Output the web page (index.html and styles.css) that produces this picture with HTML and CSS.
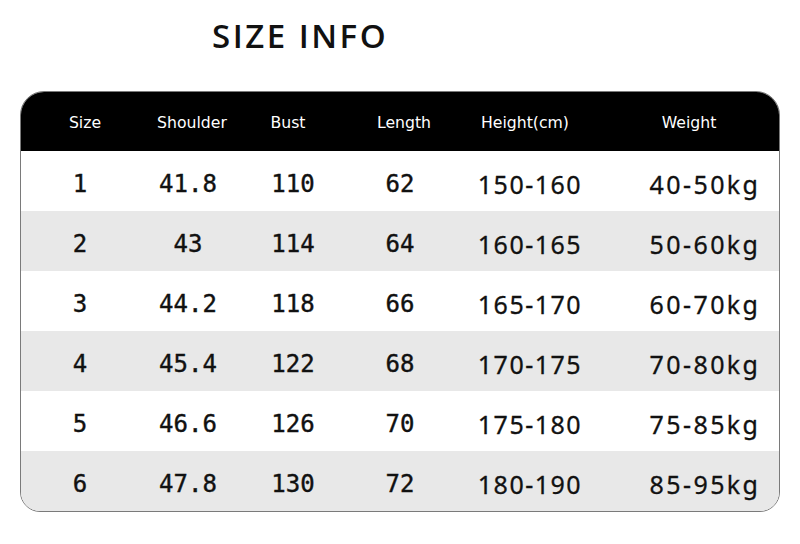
FILE: index.html
```html
<!DOCTYPE html>
<html>
<head>
<meta charset="utf-8">
<link rel="stylesheet" href="styles.css">
</head>
<body>
<div class="page">
  <h1 class="title">SIZE INFO</h1>
  <div class="table">
    <div class="row head">
      <div class="c c1">Size</div><div class="c c2">Shoulder</div><div class="c c3">Bust</div><div class="c c4">Length</div><div class="c c5">Height(cm)</div><div class="c c6">Weight</div>
    </div>
    <div class="row">
      <div class="c c1">1</div><div class="c c2">41.8</div><div class="c c3">110</div><div class="c c4">62</div><div class="c c5">150-160</div><div class="c c6">40-50kg</div>
    </div>
    <div class="row alt">
      <div class="c c1">2</div><div class="c c2">43</div><div class="c c3">114</div><div class="c c4">64</div><div class="c c5">160-165</div><div class="c c6">50-60kg</div>
    </div>
    <div class="row">
      <div class="c c1">3</div><div class="c c2">44.2</div><div class="c c3">118</div><div class="c c4">66</div><div class="c c5">165-170</div><div class="c c6">60-70kg</div>
    </div>
    <div class="row alt">
      <div class="c c1">4</div><div class="c c2">45.4</div><div class="c c3">122</div><div class="c c4">68</div><div class="c c5">170-175</div><div class="c c6">70-80kg</div>
    </div>
    <div class="row">
      <div class="c c1">5</div><div class="c c2">46.6</div><div class="c c3">126</div><div class="c c4">70</div><div class="c c5">175-180</div><div class="c c6">75-85kg</div>
    </div>
    <div class="row alt">
      <div class="c c1">6</div><div class="c c2">47.8</div><div class="c c3">130</div><div class="c c4">72</div><div class="c c5">180-190</div><div class="c c6">85-95kg</div>
    </div>
  </div>
</div>
</body>
</html>
```
FILE: styles.css
```css
html, body {
  margin: 0;
  padding: 0;
  background: #fff;
}
.page {
  width: 800px;
  height: 544px;
  padding-top: 14px;
  box-sizing: border-box;
}
.title {
  margin: 0 0 0 212px;
  height: 77px;
  font-family: "Open Sans", sans-serif;
  font-weight: 600;
  font-size: 33px;
  letter-spacing: 2.5px;
  line-height: 44px;
  color: #111;
}
.table {
  margin-left: 20px;
  width: 760px;
  border: 1px solid #7a7a7a;
  border-radius: 24px 24px 20px 20px;
  overflow: hidden;
  box-sizing: border-box;
}
.row {
  display: grid;
  grid-template-columns: 118px 98px 112px 102px 158px 170px;
  height: 60px;
  align-items: center;
  font-family: "DejaVu Sans Mono", monospace;
  font-size: 24px;
  color: #111;
  background: #fff;
  -webkit-text-stroke: 0.4px #111;
}
.row .c {
  text-align: center;
  padding-top: 6px;
}
.row.alt {
  background: #e8e8e8;
}
.row.head {
  height: 59px;
  background: #000;
  color: #fff;
  font-family: "DejaVu Sans", sans-serif;
  font-size: 15.7px;
  -webkit-text-stroke: 0;
}
.row.head .c {
  padding-top: 2px;
}
.row .c5, .row .c6 {
  font-family: "Noto Sans", sans-serif;
  font-size: 25px;
  letter-spacing: 1.5px;
  -webkit-text-stroke: 0.3px #111;
}
.row .c6 {
  padding-left: 22px;
  letter-spacing: 2.4px;
}
.row.head .c1 { padding-left: 10px; }
.row.head .c2 { padding-left: 8px; }
.row.head .c3 { padding-right: 10px; }
.row.head .c4 { padding-left: 8px; }
.row.head .c5 { padding-right: 10px; font-family: "DejaVu Sans", sans-serif; font-size: 15.7px; letter-spacing: 0; -webkit-text-stroke: 0; }
.row.head .c6 { padding-left: 0; padding-right: 10px; font-family: "DejaVu Sans", sans-serif; font-size: 15.7px; letter-spacing: 0; -webkit-text-stroke: 0; }
```
